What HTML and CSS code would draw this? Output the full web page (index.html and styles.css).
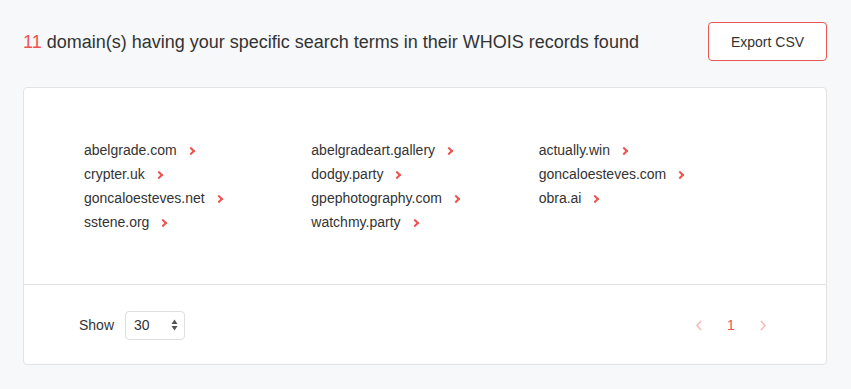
FILE: index.html
```html
<!DOCTYPE html>
<html lang="en">
<head>
<meta charset="utf-8">
<title>WHOIS results</title>
<link rel="stylesheet" href="styles.css">
</head>
<body>
<div class="page">
  <header class="head">
    <h1 class="title"><span class="count">11</span> domain(s) having your specific search terms in their WHOIS records found</h1>
    <button class="export" type="button">Export CSV</button>
  </header>
  <section class="card">
    <ul class="domains">
      <li><a href="#">abelgrade.com<span class="chev"></span></a></li>
      <li><a href="#">abelgradeart.gallery<span class="chev"></span></a></li>
      <li><a href="#">actually.win<span class="chev"></span></a></li>
      <li><a href="#">crypter.uk<span class="chev"></span></a></li>
      <li><a href="#">dodgy.party<span class="chev"></span></a></li>
      <li><a href="#">goncaloesteves.com<span class="chev"></span></a></li>
      <li><a href="#">goncaloesteves.net<span class="chev"></span></a></li>
      <li><a href="#">gpephotography.com<span class="chev"></span></a></li>
      <li><a href="#">obra.ai<span class="chev"></span></a></li>
      <li><a href="#">sstene.org<span class="chev"></span></a></li>
      <li><a href="#">watchmy.party<span class="chev"></span></a></li>
    </ul>
    <footer class="foot">
      <div class="show">
        <span class="show-label">Show</span>
        <div class="select">
          <span class="select-value">30</span>
          <svg class="select-arrows" width="7" height="12" viewBox="0 0 7 12"><path d="M3.5 0.5 L6.5 5 L0.5 5 Z" fill="#555"/><path d="M3.5 11.5 L6.5 7 L0.5 7 Z" fill="#555"/></svg>
        </div>
      </div>
      <nav class="pager">
        <span class="pg pg-arrow"><svg width="6" height="11" viewBox="0 0 6 11"><path d="M5 1 L1 5.5 L5 10" fill="none" stroke="currentColor" stroke-width="1.6"/></svg></span>
        <span class="pg pg-num">1</span>
        <span class="pg pg-arrow"><svg width="6" height="11" viewBox="0 0 6 11"><path d="M1 1 L5 5.5 L1 10" fill="none" stroke="currentColor" stroke-width="1.6"/></svg></span>
      </nav>
    </footer>
  </section>
</div>
</body>
</html>
```
FILE: styles.css
```css
* { box-sizing: border-box; }
html, body { margin: 0; padding: 0; }
body {
  background: #f7f8fa;
  font-family: "Liberation Sans", Arial, sans-serif;
  color: #333;
}
.page {
  padding: 22px 24px 0 23px;
}
.head {
  display: flex;
  justify-content: space-between;
  align-items: center;
  height: 39px;
}
.title {
  margin: 0;
  font-size: 18px;
  font-weight: normal;
  color: #333;
  line-height: 24px;
}
.count { color: #ef5350; }
.export {
  width: 119px;
  height: 39px;
  border: 1px solid #e85552;
  border-radius: 4px;
  background: #fff;
  font-family: inherit;
  font-size: 14px;
  color: #333;
  padding: 0;
}
.card {
  margin-top: 26px;
  background: #fff;
  border: 1px solid #e3e3e3;
  border-radius: 4px;
  height: 278px;
  display: flex;
  flex-direction: column;
}
.domains {
  list-style: none;
  margin: 0;
  padding: 50px 60px 0 60px;
  height: 197px;
  display: grid;
  grid-template-columns: repeat(3, 1fr);
  grid-auto-rows: 24px;
  align-content: start;
  border-bottom: 1px solid #e3e3e3;
}
.domains li {
  font-size: 14px;
  line-height: 24px;
}
.domains a {
  color: #333;
  text-decoration: none;
  display: inline-flex;
  align-items: center;
}
.chev {
  display: inline-block;
  width: 6px;
  height: 6px;
  border-top: 2px solid #ef5350;
  border-right: 2px solid #ef5350;
  transform: rotate(45deg);
  margin-left: 11px;
  margin-top: 1px;
}
.foot {
  flex: 1;
  display: flex;
  justify-content: space-between;
  align-items: center;
  padding: 1px 47px 0 55px;
}
.show {
  display: flex;
  align-items: center;
  gap: 11px;
  font-size: 14px;
}
.select {
  width: 60px;
  height: 29px;
  border: 1px solid #dedede;
  border-radius: 4px;
  display: flex;
  align-items: center;
  justify-content: space-between;
  padding: 0 6px 0 8px;
  font-size: 14px;
}
.select-arrows { display: block; }
.pager {
  display: flex;
  align-items: center;
}
.pg {
  width: 32px;
  display: flex;
  justify-content: center;
  align-items: center;
  font-size: 14px;
}
.pg-arrow { color: #f7b9b7; }
.pg-num { color: #ef5350; }
```
